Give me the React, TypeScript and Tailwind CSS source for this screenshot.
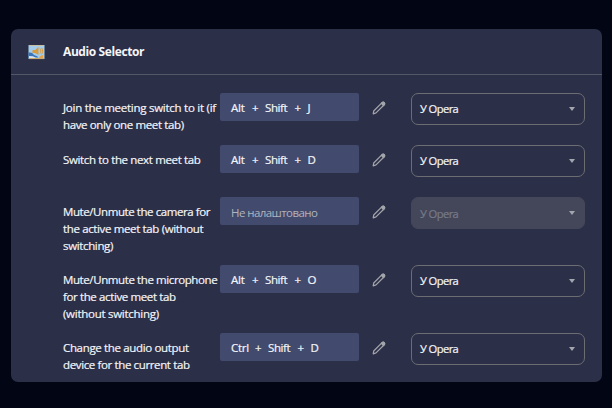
type Line = { text: string; tracking: string };
type Row = { label: Line[]; keys: string[]; height: string };

const rows: Row[] = [
  { label: [{ text: 'Join the meeting switch to it (if', tracking: 'tracking-[-0.26px]' }, { text: 'have only one meet tab)', tracking: 'tracking-[-0.37px]' }], keys: ['Alt', 'Shift', 'J'], height: 'h-[52px]' },
  { label: [{ text: 'Switch to the next meet tab', tracking: 'tracking-[-0.36px]' }], keys: ['Alt', 'Shift', 'D'], height: 'h-[52px]' },
  { label: [{ text: 'Mute/Unmute the camera for', tracking: 'tracking-[-0.42px]' }, { text: 'the active meet tab (without', tracking: 'tracking-[-0.36px]' }, { text: 'switching)', tracking: 'tracking-[-0.35px]' }], keys: [], height: 'h-[68px]' },
  { label: [{ text: 'Mute/Unmute the microphone', tracking: 'tracking-[-0.4px]' }, { text: 'for the active meet tab', tracking: 'tracking-[-0.38px]' }, { text: '(without switching)', tracking: 'tracking-[-0.27px]' }], keys: ['Alt', 'Shift', 'O'], height: 'h-[68px]' },
  { label: [{ text: 'Change the audio output', tracking: 'tracking-[-0.34px]' }, { text: 'device for the current tab', tracking: 'tracking-[-0.37px]' }], keys: ['Ctrl', 'Shift', 'D'], height: 'h-[48px]' },
];

function AppIcon() {
  return (
    <svg width="17" height="16" viewBox="0 0 17 16">
      <rect x="0.5" y="1" width="16" height="14" fill="#a3cdea" />
      <path d="M1 1.500h15" stroke="#c9bfa0" strokeWidth="1" />
      <path d="M0.5 9c2-1 4 0 5 1.500s4 1 5 3H.5z" fill="#3973b8" />
      <path d="M1 12l4 .2 3 1.800H1z" fill="#d5e6f2" />
      <path d="M4.500 6h2.500l3.500-3v8L7 9H4.500z" fill="#d99c3d" />
      <path d="M12 4.500c1 1.500 1 4 0 5M13.700 3.800c1.200 2 1.200 4.500 0 6.500" fill="none" stroke="#d99c3d" strokeWidth="1" />
      <path d="M11 14l1-2 3-1v3z" fill="#e0a44d" />
      <path d="M1 14.600h15" stroke="#cfa668" />
    </svg>
  );
}

function Pencil() {
  return (
    <svg width="14" height="14" viewBox="0 0 14 14" fill="none" stroke="#a2a5a9" strokeWidth="1.25" strokeLinejoin="round">
      <path d="M1.200 12.800l.5-2.800L10.100 1.600c.6-.6 1.500-.6 2.100 0s.6 1.500 0 2.100L4 11.900z" />
      <path d="M9.300 2.400l2.100 2.100.8-.8c.6-.6.6-1.500 0-2.100s-1.500-.6-2.100 0z" fill="#a2a5a9" />
    </svg>
  );
}

export default function App() {
  return (
    <main className="h-[408px] w-[612px] bg-[#020514] pt-[29px] pl-[11px] font-['Open_Sans','Noto_Sans',sans-serif] text-[11.5px] leading-[17.3px] font-medium whitespace-pre text-[#f4f5f8] [-webkit-text-stroke:0.2px]">
      <section className="h-[353px] w-[591px] rounded-[7px] bg-[#2b2f48]">
        <header className="flex h-[46px] items-center border-b border-[#535767] pl-[17px]">
          <AppIcon />
          <h1 className="ml-[18px] text-[12px] font-bold tracking-[-0.4px] [-webkit-text-stroke:0px]">Audio Selector</h1>
        </header>
        <div className="pt-[18px] pl-[52px]">
          {rows.map((row, i) => {
            const disabled = row.keys.length === 0;
            return (
              <div key={i} className={`flex items-start ${row.height}`}>
                <div className="w-[157px] shrink-0 pt-[5.6px]">
                  {row.label.map((line) => <div key={line.text} className={line.tracking}>{line.text}</div>)}
                </div>
                <div className="flex h-7 w-[139px] shrink-0 items-center rounded-[2px] bg-[#424b6e] pt-[2px] pl-[11px] tracking-[-0.25px]">
                  {disabled ? (
                    <span className="pt-px font-normal tracking-[-0.57px] text-[#b1b3bd] [-webkit-text-stroke:0px]">Не налаштовано</span>
                  ) : (
                    <div className="flex gap-[7px]">
                      <span className={row.keys[0] === 'Ctrl' ? 'w-[17px]' : 'w-[14px]'}>{row.keys[0]}</span>
                      <span className="w-[6px]">+</span>
                      <span className="w-[22.5px] tracking-[-0.4px]">{row.keys[1]}</span>
                      <span className="w-[6px]">+</span>
                      <span>{row.keys[2]}</span>
                    </div>
                  )}
                </div>
                <div className="ml-[13px] pt-[7.5px]"><Pencil /></div>
                <div className={`ml-[25px] flex h-8 w-[174px] items-center justify-between rounded-[7px] border pr-[9px] pl-2 ${disabled ? 'border-[#44475a] bg-[#44475a]' : 'border-[#6b6d71]'}`}>
                  <span className={disabled ? 'pt-px text-[11.2px] tracking-[-0.6px] text-[#777a88]' : 'text-[11.2px] tracking-[-0.6px]'}>У Opera</span>
                  <svg width="6" height="4" viewBox="0 0 6 4"><path d="M0 0h6L3 4z" fill="#a3a6ad" /></svg>
                </div>
              </div>
            );
          })}
        </div>
      </section>
    </main>
  );
}
